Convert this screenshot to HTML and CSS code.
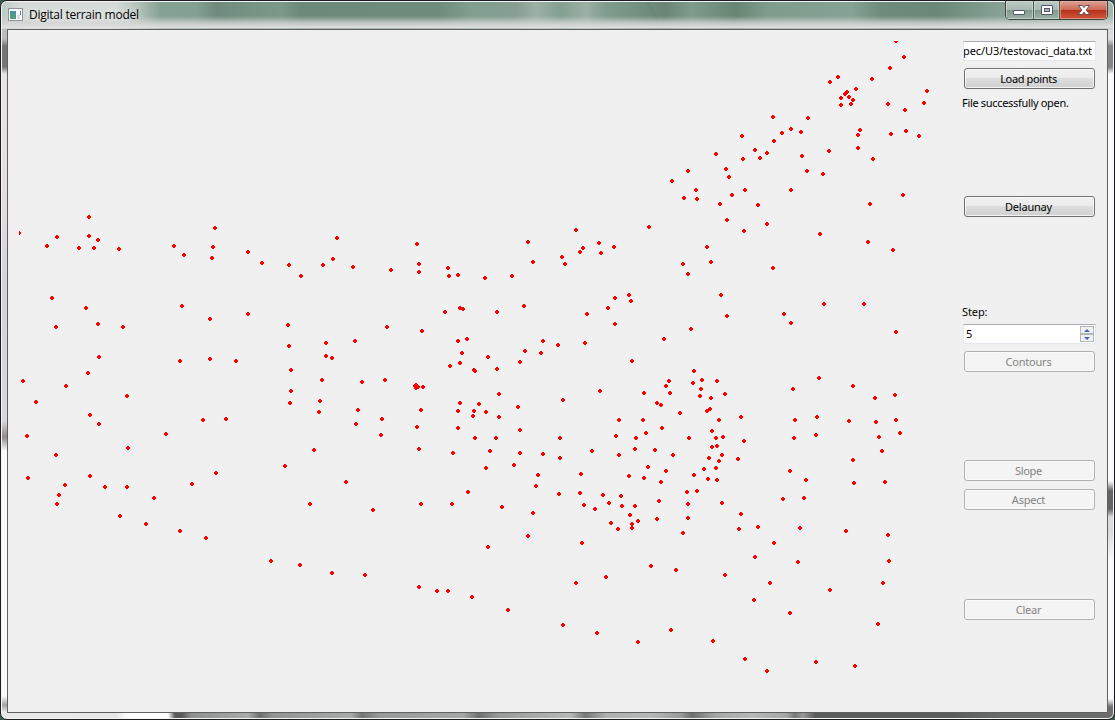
FILE: index.html
```html
<!DOCTYPE html>
<html lang="en">
<head>
<meta charset="utf-8">
<title>Digital terrain model</title>
<link rel="stylesheet" href="styles.css">
</head>
<body>
<div class="window">
  <header class="titlebar">
    <svg class="app-icon" width="16" height="14" viewBox="0 0 16 14" shape-rendering="crispEdges">
      <rect x="0" y="0" width="15" height="13" fill="#8c9499"/>
      <rect x="1" y="1" width="13" height="11" fill="#fbfbfb"/>
      <rect x="2" y="3" width="6" height="8" fill="#4a93a0"/>
      <rect x="2" y="6" width="5" height="5" fill="#4f9e7c"/>
      <rect x="9" y="7" width="3" height="4" fill="#dcdfe0"/>
      <rect x="12" y="3" width="1" height="4" fill="#4a82b0"/>
    </svg>
    <span class="title">Digital terrain model</span>
    <div class="controls">
      <span class="ctl ctl-min"><svg width="14" height="14" viewBox="0 0 14 14"><rect x="1.5" y="7.5" width="11" height="4" rx=".5" fill="#fff" stroke="#53576a"/></svg></span>
      <span class="ctl ctl-max"><svg width="14" height="14" viewBox="0 0 14 14"><rect x="1.5" y="2.5" width="11" height="9" rx=".5" fill="#fff" stroke="#53576a"/><rect x="4.5" y="5.5" width="5" height="3" fill="#a5b8b0" stroke="#53576a"/></svg></span>
      <span class="ctl ctl-close"><svg width="14" height="14" viewBox="0 0 14 14"><path d="M1.500 2.500h3.900L7 4.600l1.600-2.100h3.900L9.200 6.900l3.500 4.600H8.700L7 9.100l-1.700 2.400H1.300l3.500-4.600z" fill="#fff" stroke="#5b4550" stroke-width=".9"/></svg></span>
    </div>
  </header>
  <main class="client">
    <svg class="canvas" width="929" height="660" viewBox="19 41 929 660" shape-rendering="crispEdges"><path id="points" fill="#f00"/></svg>
    <aside class="panel">
      <div class="field path-field"><span>pec/U3/testovaci_data.txt</span></div>
      <button class="btn load">Load points</button>
      <p class="label status">File successfully open.</p>
      <button class="btn delaunay">Delaunay</button>
      <p class="label step">Step:</p>
      <div class="field spin"><span>5</span>
        <span class="arrows">
          <i><svg width="6" height="3" viewBox="0 0 6 3"><path d="M3 0L6 3H0z" fill="#4c62b5"/></svg></i>
          <i><svg width="6" height="3" viewBox="0 0 6 3"><path d="M0 0H6L3 3z" fill="#4c62b5"/></svg></i>
        </span>
      </div>
      <button class="btn contours" disabled>Contours</button>
      <button class="btn slope" disabled>Slope</button>
      <button class="btn aspect" disabled>Aspect</button>
      <button class="btn clear" disabled>Clear</button>
    </aside>
  </main>
</div>
<script src="points.js"></script>
</body>
</html>
```
FILE: styles.css
```css
* { box-sizing: border-box; }
body { margin: 0; background: #3d5a4e; overflow: hidden; }
.window {
  width: 1115px; height: 720px;
  display: grid; grid-template-rows: 27px 684px;
  padding: 1px 6px 5px;
  border: 1px solid #1b1b1f; border-radius: 7px;
  box-shadow: inset 0 0 0 1px #f4f6f5;
  background:
    linear-gradient(to bottom, transparent 15px, #d4d5d4cc 22px, #e0e0e0 27px, transparent 28px) 0 0 / 100% 28px no-repeat,
    linear-gradient(62deg, transparent 46%, #5f7c6c66 50%, transparent 50.5%) 590px 0 / 130px 28px no-repeat,
    linear-gradient(to right, #bccac3 0, #d5dbd8 20px, #d5dbd8 115px, #a9bbb2 142px, #85a193 160px, #83a092 195px, #708b7d 215px, #7b9989 280px, #6c8979 300px, #6f8c7c 440px, #819e8f 470px, #869f92 515px, #9ab1a5 535px, #83a091 560px, #9ab1a5 585px, #7f9c8d 605px, #6a8575 665px, #7f9b8c 690px, #688473 735px, #7f9b8c 765px, #86a294 850px, #6f8b7b 880px, #6a8777 935px, #87a295 1000px, #a4b9af 1115px) 0 0 / 100% 28px no-repeat,
    linear-gradient(to right, #e9e9e9 0, #e6e6e6 115px, #fcfcfc 125px, #fcfcfc 167px, #5a5a5a 174px, #5a5a5a 181px, #8e908f 190px, #a7aaa8 247px, #6e706f 259px, #929493 272px, #a7aaa8 350px, #737574 361px, #989a99 378px, #a5a8a6 462px, #6d6f6e 478px, #999b9a 498px, #b5b8b6 570px, #777978 584px, #aeb1ae 606px, #b5b8b6 650px, #999b9a 680px, #6d6f6e 691px, #a5a8a6 715px, #b5b8b6 750px, #a5a8a6 785px, #777978 794px, #999 802px, #5b5d5c 814px, #5b5d5c 950px, #6b6d6c 1000px, #6b6d6c 1115px) 0 100% / 100% 7px no-repeat,
    linear-gradient(to bottom, #ccc 0, #dedede 38px, #858585 45px, #858585 66px, #fafafa 73px, #fafafa 480px, #646464 490px, #646464 508px, #dcdcdc 516px, #dcdcdc 532px, #fafafa 560px, #fafafa 698px, #6d6d6d 706px) 100% 0 / 8px 100% no-repeat,
    linear-gradient(to bottom, #ccc 0, #bbb 38px, #777 45px, #777 66px, #e8e4e4 73px, #e4dede 190px, #d4d1dc 290px, #dad6de 420px, #918b89 436px, #fafafa 450px, #fafafa 695px, #a0a0a0 704px, #f0f0f0 712px) 0 0 / 7px 100% no-repeat,
    #eee;
}
.titlebar { display: flex; align-items: flex-start; }
.app-icon { margin: 6px 0 0 1px; flex: none; }
.title {
  margin: 4px 0 0 5px; flex: 1;
  font: 12px/18px "Open Sans", "Noto Sans", sans-serif; letter-spacing: -0.24px; color: #000;
  text-shadow: 0 0 6px #fff;
}
.controls {
  display: flex; width: 103px; height: 19px; margin-top: -1px;
  border: 1px solid #3c4843; border-top: 0; border-radius: 0 0 5px 5px; overflow: hidden;
}
.ctl {
  display: flex; align-items: center; justify-content: center; width: 27px;
  background: linear-gradient(#bccac3 0, #a9bab2 48%, #80978b 50%, #9db3a8 100%);
  box-shadow: inset 0 0 0 1px #d5dfda99;
}
.ctl + .ctl { border-left: 1px solid #4c5c55; }
.ctl-close { width: 48px; background: linear-gradient(#dea397 0, #cc6a56 48%, #b5301a 50%, #d2583a 100%); box-shadow: inset 0 0 0 1px #eab3a599; }
.client {
  display: flex; justify-content: space-between;
  width: 1101px; height: 684px; padding: 11px 11px 0;
  border: 1px solid #606060; background: #f0f0f0;
}
.canvas { flex: none; display: block; }
.panel {
  width: 133px; display: flex; flex-direction: column; align-items: flex-start;
  font: 11px/14px "Noto Sans", "Open Sans", sans-serif;
}
.field {
  display: flex; align-items: center; width: 133px; height: 20px; flex: none;
  background: #fff; border: 1px solid #e3e9ef; border-top-color: #abadb3;
  overflow: hidden; white-space: nowrap;
}
.path-field { justify-content: flex-end; padding-right: 3px; letter-spacing: -0.09px; }
.btn {
  width: 131px; height: 21px; flex: none; margin: 0 0 0 1px; padding: 0 2px 0 0;
  border: 1px solid #707070; border-radius: 3px;
  background: linear-gradient(#f2f2f2 0, #ebebeb 48%, #dddddd 50%, #cfcfcf 100%);
  box-shadow: inset 0 0 0 1px #fbfbfbcc;
  font: inherit; color: #000; letter-spacing: -0.35px;
}
.btn:disabled { color: #838383; background: #f4f4f4; border-color: #adb2b5; }
.label { margin: 0 0 0 -1px; height: 14px; letter-spacing: -0.32px; white-space: nowrap; }
.load { margin-top: 7px; }
.status { margin-top: 7px; }
.delaunay { margin-top: 86px; letter-spacing: -0.2px; }
.step { margin-top: 88px; letter-spacing: -0.1px; }
.spin { margin-top: 5px; padding: 0 1px 0 2px; justify-content: space-between; }
.arrows { display: grid; grid-template-rows: 8px 8px; width: 14px; height: 16px; }
.arrows i {
  display: flex; align-items: center; justify-content: center;
  border: 1px solid #b3b5ba; background: #f1f1f1;
}
.contours { margin-top: 7px; letter-spacing: -0.2px; }
.slope { margin-top: 88px; }
.aspect { margin-top: 8px; letter-spacing: -0.2px; }
.clear { margin-top: 89px; letter-spacing: -0.2px; }
```
FILE: points.js
```js
// Terrain sample points, "x,y" in window coordinates.
const data = `
89,217 19,233 57,237 89,236 98,240 47,246 79,248 94,248 119,249 174,246 215,228 213,247 212,258 184,255 248,252 262,263
289,265 301,276 52,298 86,308 182,306 210,319 248,314 56,327 98,324 123,327 288,325 289,346 99,357 180,361 210,359 236,361
291,370 88,373 23,381 66,386 291,391 290,403 36,402 127,396 90,415 99,424 203,420 226,419 166,434 27,436 128,448 56,455
285,466 28,478 90,476 216,473 65,485 105,487 127,487 192,484 59,495 57,504 154,498 120,516 146,524 180,531 206,538
337,238 417,244 528,242 323,265 333,259 353,267 391,270 419,264 419,272 448,268 449,276 458,275 485,278 512,276 533,262
460,308 463,309 445,312 497,312 524,306 387,327 422,331 355,341 326,343 326,356 332,358 458,341 467,339 462,353 460,363
450,366 488,357 497,369 474,370 475,371 520,362 525,351 541,353 543,341 558,345 322,380 362,382 385,380 415,386 416,385
416,388 418,387 423,387 499,394 320,401 319,412 358,410 356,424 382,419 381,435 421,410 417,427 419,449 460,403 458,411
479,404 474,411 473,416 486,412 499,417 518,407 458,428 520,430 475,438 496,438 453,453 490,451 520,453 543,454 514,465
486,468 538,475 536,486 314,450 346,482 310,504 373,510 421,504 452,504 468,492 502,507 533,513 528,536
576,230 649,227 727,220 744,231 767,224 562,257 565,264 580,252 583,248 599,243 601,253 614,247 707,247 683,264 688,274
711,262 773,268 615,298 629,295 631,301 608,308 587,314 615,324 721,295 727,316 691,329 664,339 585,343 632,361 694,371
669,381 666,386 670,393 644,393 693,383 702,380 717,381 701,389 700,396 711,398 725,394 600,391 563,400 657,403 661,405
680,413 707,411 710,409 741,417 619,420 643,420 662,428 719,420 712,431 646,433 616,436 636,438 689,438 716,438 723,437
744,441 560,438 560,458 592,451 619,455 635,449 655,450 673,455 712,447 717,446 722,455 709,458 719,461 738,459 704,469
716,468 708,479 717,480 648,467 666,471 644,478 661,482 629,476 581,474 694,475 559,494 580,493 584,505 595,509 603,495
609,503 621,496 622,506 635,506 630,515 638,521 632,524 632,528 611,523 618,529 659,501 657,519 687,492 697,491 688,504
688,518 683,533 722,503 741,514 739,529 758,527 774,543 582,543
896,41 904,57 890,68 872,79 838,77 830,82 856,89 847,92 845,94 849,97 841,98 853,100 851,104 841,105 888,104 927,91
924,103 905,110 906,131 891,134 919,136 860,130 858,135 858,148 873,159 829,151 808,118 773,117 791,129 801,132 782,133
774,141 767,153 760,158 755,150 742,136 743,159 716,154 726,169 729,177 688,171 672,181 696,190 684,198 697,199 732,195
745,190 720,204 758,205 802,156 807,171 823,174 791,190 820,234 870,204 903,195 868,242 893,250
824,304 864,304 784,314 791,323 896,332 819,378 853,386 793,389 895,395 875,398 817,417 795,420 849,421 876,422 896,420
900,433 816,435 794,438 879,437 882,451 853,460 790,471 806,480 854,483 885,482 783,499 804,498 800,528 846,531 888,535
755,557 798,562 889,561 651,566 676,570 725,575 606,577 576,583 770,583 883,583 830,590 754,600 790,613 878,624 563,625
597,633 638,642 671,630 713,641 745,659 767,671 816,662 855,666 419,587 437,591 448,591 472,597 508,610 488,547
271,561 300,565 332,573 365,575`;

// Each point is a 4x4 block with its corner pixels removed.
const path = data.trim().split(/\s+/).map(p => {
  const [x, y] = p.split(',').map(Number);
  return `M${x - 2} ${y - 1}h4v2h-4zM${x - 1} ${y - 2}h2v4h-2z`;
}).join('');
document.getElementById('points').setAttribute('d', path);
```
